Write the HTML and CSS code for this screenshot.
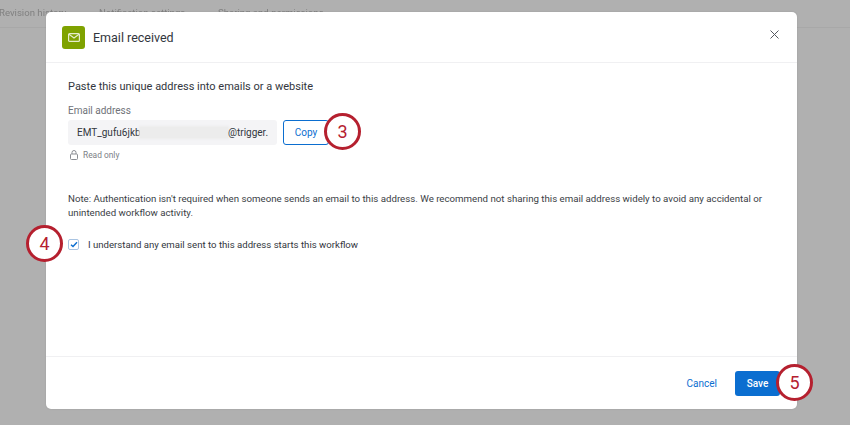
FILE: index.html
```html
<!DOCTYPE html>
<html lang="en">
<head>
<meta charset="utf-8">
<title>Email received</title>
<link rel="stylesheet" href="styles.css">
</head>
<body>
<nav class="tabs">
  <span class="tab tab-first">Revision history</span>
  <span class="tab tab-second">Notification settings</span>
  <span class="tab">Sharing and permissions</span>
</nav>
<section class="modal">
  <header class="modal-head">
    <span class="app-icon">
      <svg width="12" height="9" viewBox="0 0 12 9"><rect x="0.6" y="0.6" width="10.800" height="7.800" rx="1" fill="none" stroke="#e6edcc" stroke-width="1.200"/><path d="M1 1.300 6 5l5-3.700" fill="none" stroke="#e6edcc" stroke-width="1.100"/></svg>
    </span>
    <h1 class="modal-title">Email received</h1>
    <svg class="close" width="9" height="9" viewBox="0 0 9 9"><path d="M.5.500l8 8M8.500.500l-8 8" stroke="#55585f" stroke-width="1" fill="none"/></svg>
  </header>
  <div class="modal-body">
    <h2 class="lead">Paste this unique address into emails or a website</h2>
    <div class="field-label">Email address</div>
    <div class="field-row">
      <div class="address">
        <span class="addr-start">EMT_gufu6jkb</span><span class="addr-blur"></span><span>@trigger.</span>
      </div>
      <button class="copy">Copy</button>
    </div>
    <div class="readonly">
      <svg width="8" height="10" viewBox="0 0 8 10"><rect x=".5" y="4" width="7" height="5.500" rx="1" fill="none" stroke="#8b8e94"/><path d="M2 4V2.500a2 2 0 0 1 4 0V4" fill="none" stroke="#8b8e94"/></svg>
      <span>Read only</span>
    </div>
    <p class="note">Note: Authentication isn't required when someone sends an email to this address. We recommend not sharing this email address widely to avoid any accidental or unintended workflow activity.</p>
    <div class="agree">
      <span class="checkbox">
        <svg width="8" height="7" viewBox="0 0 8 7"><path d="M1 3.700 3 5.500 7 1.200" fill="none" stroke="#0b6ed0" stroke-width="1.400"/></svg>
      </span>
      <span>I understand any email sent to this address starts this workflow</span>
    </div>
  </div>
  <footer class="modal-foot">
    <button class="cancel">Cancel</button>
    <button class="save">Save</button>
  </footer>
</section>
<span class="callout callout-3">3</span>
<span class="callout callout-4">4</span>
<span class="callout callout-5">5</span>
</body>
</html>
```
FILE: styles.css
```css
* { box-sizing: border-box; }
html, body { margin: 0; height: 425px; overflow: hidden; }
body {
  background: #b0b0b0;
  font-family: "Roboto", "Liberation Sans", sans-serif;
  color: #32363d;
  position: relative;
}
.tabs {
  display: flex;
  height: 28px;
  border-bottom: 1px solid #a8a8a8;
  font-size: 9.600px;
  line-height: 13px;
  color: #808080;
  padding-top: 6px;
  filter: blur(.4px);
}
.tab-first { width: 100px; margin-left: -1px; }
.tab-second { width: 119px; }
.modal {
  position: absolute;
  left: 46px;
  top: 12px;
  width: 751px;
  height: 397px;
  background: #fff;
  border-radius: 5px;
  display: flex;
  flex-direction: column;
  box-shadow: 0 0 2px rgba(0,0,0,.12);
}
.modal-head {
  height: 51px;
  flex: none;
  display: flex;
  align-items: center;
  padding: 0 18px 0 16px;
  border-bottom: 1px solid #f0f0f2;
}
.app-icon {
  width: 23px;
  height: 23px;
  border-radius: 3px;
  background: #7fa200;
  display: flex;
  align-items: center;
  justify-content: center;
}
.modal-title {
  margin: 0 0 0 8px;
  font-size: 12.500px;
  font-weight: 400;
  flex: 1;
}
.close { margin-top: -6px; }
.modal-body {
  flex: 1;
  padding: 16px 22px 0;
}
.lead {
  margin: 0;
  font-size: 11px;
  line-height: 15px;
  font-weight: 400;
}
.field-label {
  margin-top: 10px;
  font-size: 10px;
  line-height: 13px;
  color: #6f7278;
}
.field-row {
  display: flex;
  margin-top: 3px;
  gap: 6px;
}
.address {
  width: 209px;
  height: 25px;
  background: #f4f4f6;
  border-radius: 3px;
  display: flex;
  align-items: center;
  padding-left: 9px;
  font-size: 10px;
  white-space: nowrap;
}
.addr-start { width: 63px; flex: none; }
.addr-blur {
  width: 88px;
  height: 11px;
  background: #ececec;
  box-shadow: 0 0 2px 1px #ececec;
  flex: none;
}
.copy {
  width: 46px;
  height: 25px;
  background: #fff;
  border: 1px solid #0b6ed0;
  border-radius: 3px;
  color: #0b6ed0;
  font: inherit;
  font-size: 10px;
  padding: 0;
}
.readonly {
  display: flex;
  align-items: center;
  gap: 5px;
  margin-top: 4px;
  font-size: 8.400px;
  line-height: 12px;
  color: #7d8086;
  padding-left: 2px;
}
.note {
  margin: 31px 0 0;
  font-size: 9.700px;
  line-height: 14px;
  color: #3a3e45;
}
.agree {
  display: flex;
  align-items: center;
  gap: 9px;
  margin-top: 18px;
  font-size: 9.620px;
  line-height: 13px;
}
.checkbox {
  width: 11px;
  height: 11px;
  border: 1px solid #a9c4e2;
  border-radius: 2px;
  display: flex;
  align-items: center;
  justify-content: center;
}
.modal-foot {
  height: 53px;
  flex: none;
  display: flex;
  align-items: center;
  justify-content: flex-end;
  gap: 18px;
  padding: 1px 17px 0 0;
  border-top: 1px solid #f0f0f2;
}
.cancel {
  background: none;
  border: 0;
  padding: 0;
  color: #0b6ed0;
  font: inherit;
  font-size: 10px;
}
.save {
  width: 45px;
  height: 25px;
  background: #0b6ed0;
  color: #fff;
  border: 0;
  border-radius: 3px;
  font: inherit;
  font-size: 10px;
  font-weight: 500;
  padding: 0;
}
.callout {
  position: absolute;
  width: 37px;
  height: 37px;
  border-radius: 50%;
  background: #fff;
  border: 3px solid #b5202f;
  color: #b5202f;
  font-size: 18px;
  line-height: 31px;
  text-align: center;
}
.callout-3 { left: 324px; top: 113px; }
.callout-4 { left: 26px; top: 225px; }
.callout-5 { left: 776px; top: 364px; }
```
